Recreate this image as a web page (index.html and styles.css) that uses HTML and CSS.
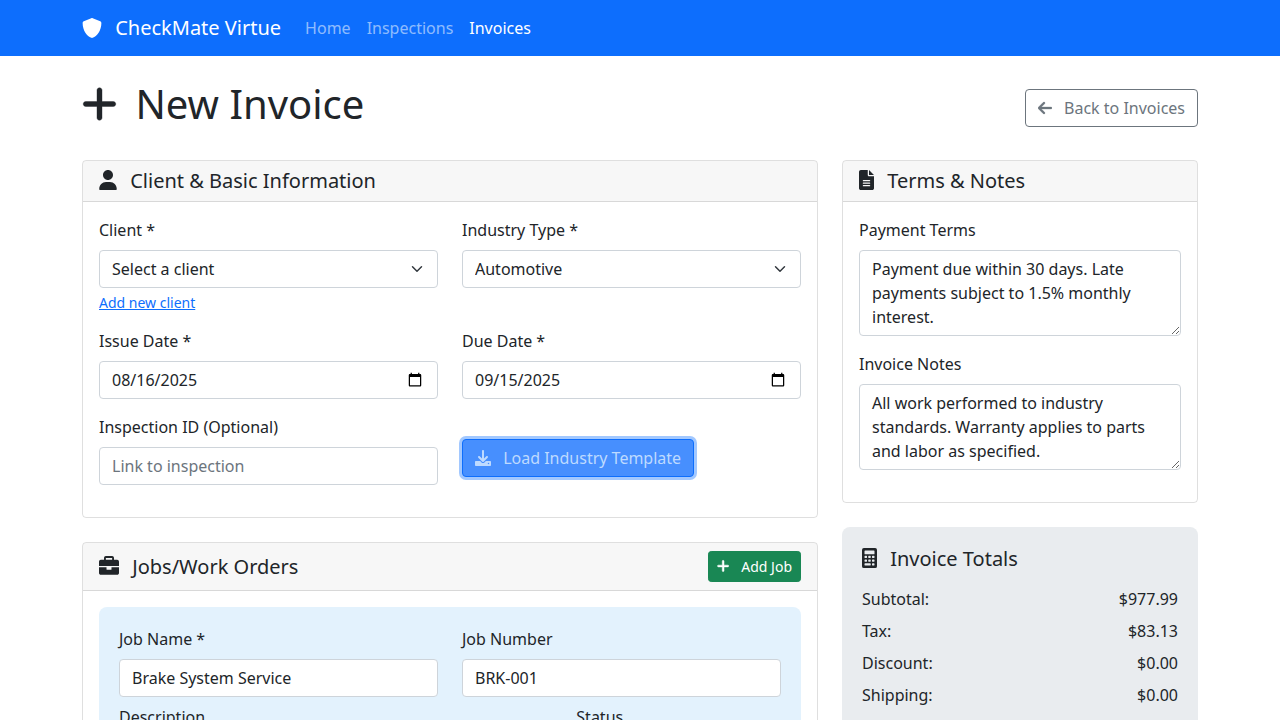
FILE: index.html
```html
<!DOCTYPE html>
<html lang="en">
<head>
<meta charset="utf-8">
<title>New Invoice - CheckMate Virtue</title>
<link rel="stylesheet" href="styles.css">
</head>
<body>
<svg class="sprite" aria-hidden="true">
  <symbol id="i-shield" viewBox="0 0 512 512"><path d="M256 0c6.500 0 12.500 1.200 18.400 3.700l192 80C484.300 91.100 496 108.600 496 128c0 198.500-114.500 335.700-221.500 380.300c-11.800 4.900-25.100 4.900-36.900 0C130.500 463.700 16 326.500 16 128c0-19.400 11.700-36.900 29.600-44.300l192-80C243.500 1.200 249.500 0 256 0z"/></symbol>
  <symbol id="i-plus" viewBox="0 0 448 512"><path d="M256 80c0-17.700-14.300-32-32-32s-32 14.300-32 32V224H48c-17.700 0-32 14.300-32 32s14.300 32 32 32H192V432c0 17.700 14.300 32 32 32s32-14.300 32-32V288H400c17.700 0 32-14.300 32-32s-14.300-32-32-32H256V80z"/></symbol>
  <symbol id="i-back" viewBox="0 0 448 512"><path stroke="currentColor" stroke-width="10" d="M9.400 233.400c-12.500 12.500-12.500 32.800 0 45.300l160 160c12.500 12.500 32.800 12.500 45.300 0s12.500-32.800 0-45.300L109.200 288H416c17.700 0 32-14.300 32-32s-14.300-32-32-32H109.200L214.600 118.600c12.500-12.500 12.500-32.800 0-45.300s-32.800-12.500-45.300 0l-160 160z"/></symbol>
  <symbol id="i-user" viewBox="0 0 448 512"><path d="M224 256c70.700 0 128-57.300 128-128S294.700 0 224 0S96 57.300 96 128s57.300 128 128 128zM274.700 304H173.300C77.600 304 0 381.600 0 477.300C0 502 5 512 24 512H424C443 512 448 502 448 477.300C448 381.600 370.400 304 274.700 304z"/></symbol>
  <symbol id="i-file" viewBox="0 0 384 512"><path d="M48 0C21.500 0 0 21.500 0 48V464c0 26.500 21.500 48 48 48H336c26.500 0 48-21.500 48-48V160H256c-17.700 0-32-14.300-32-32V0H48zM256 0V128H384L256 0zM112 256H272c8.800 0 16 7.200 16 16s-7.200 16-16 16H112c-8.800 0-16-7.200-16-16s7.200-16 16-16zm0 64H272c8.800 0 16 7.200 16 16s-7.200 16-16 16H112c-8.800 0-16-7.200-16-16s7.200-16 16-16zm0 64H272c8.800 0 16 7.200 16 16s-7.200 16-16 16H112c-8.800 0-16-7.200-16-16s7.200-16 16-16z"/></symbol>
  <symbol id="i-download" viewBox="0 0 512 512"><path d="M288 32c0-17.700-14.300-32-32-32s-32 14.300-32 32V274.700l-73.400-73.400c-12.500-12.500-32.800-12.500-45.300 0s-12.500 32.800 0 45.300l128 128c12.500 12.500 32.800 12.500 45.300 0l128-128c12.500-12.500 12.500-32.800 0-45.300s-32.800-12.500-45.300 0L288 274.700V32zM32 352c-17.700 0-32 14.300-32 32v96c0 17.700 14.300 32 32 32H480c17.700 0 32-14.300 32-32V384c0-17.700-14.300-32-32-32H346.500l-45.300 45.300c-25 25-65.500 25-90.500 0L165.500 352H32zm400 56a24 24 0 1 1 0 48 24 24 0 1 1 0-48z"/></symbol>
  <symbol id="i-briefcase" viewBox="0 0 512 512"><path d="M176 48H336V96H176V48zM128 48V96H48C21.500 96 0 117.500 0 144v112H512V144c0-26.500-21.500-48-48-48H384V48c0-26.500-21.500-48-48-48H176c-26.500 0-48 21.500-48 48zM512 288H320v48c0 8.800-7.200 16-16 16H208c-8.800 0-16-7.200-16-16V288H0V432c0 26.500 21.500 48 48 48H464c26.500 0 48-21.500 48-48V288z"/></symbol>
  <symbol id="i-calc" viewBox="0 0 384 512"><path fill-rule="evenodd" d="M48 0H336a48 48 0 0 1 48 48V464a48 48 0 0 1-48 48H48a48 48 0 0 1-48-48V48A48 48 0 0 1 48 0zM80 64a16 16 0 0 0-16 16v64a16 16 0 0 0 16 16H304a16 16 0 0 0 16-16V80a16 16 0 0 0-16-16zM76 200h40q12 0 12 12v32q0 12-12 12H76q-12 0-12-12v-32q0-12 12-12zM172 200h40q12 0 12 12v32q0 12-12 12h-40q-12 0-12-12v-32q0-12 12-12zM268 200h40q12 0 12 12v32q0 12-12 12h-40q-12 0-12-12v-32q0-12 12-12zM76 296h40q12 0 12 12v32q0 12-12 12H76q-12 0-12-12v-32q0-12 12-12zM172 296h40q12 0 12 12v32q0 12-12 12h-40q-12 0-12-12v-32q0-12 12-12zM268 296h40q12 0 12 12v32q0 12-12 12h-40q-12 0-12-12v-32q0-12 12-12zM76 392H212q12 0 12 12v32q0 12-12 12H76q-12 0-12-12v-32q0-12 12-12zM268 392h40q12 0 12 12v32q0 12-12 12h-40q-12 0-12-12v-32q0-12 12-12z"/></symbol>
</svg>

<nav class="navbar">
  <div class="container navbar-inner">
    <a class="brand"><svg class="icon icon-square"><use href="#i-shield"/></svg> CheckMate Virtue</a>
    <a class="nav-link">Home</a>
    <a class="nav-link">Inspections</a>
    <a class="nav-link active">Invoices</a>
  </div>
</nav>

<main class="container">
  <header class="page-head">
    <h1><svg class="icon"><use href="#i-plus"/></svg> New Invoice</h1>
    <a class="btn btn-outline"><svg class="icon"><use href="#i-back"/></svg> Back to Invoices</a>
  </header>

  <div class="layout">
    <div class="column">
      <section class="card">
        <div class="card-header"><h5><svg class="icon"><use href="#i-user"/></svg> Client &amp; Basic Information</h5></div>
        <div class="card-body form-grid">
          <div class="field">
            <label>Client *</label>
            <select class="control select"><option>Select a client</option></select>
            <div class="form-text"><a class="link">Add new client</a></div>
          </div>
          <div class="field">
            <label>Industry Type *</label>
            <select class="control select"><option>Automotive</option></select>
          </div>
          <div class="field">
            <label>Issue Date *</label>
            <input class="control" type="date" value="2025-08-16">
          </div>
          <div class="field">
            <label>Due Date *</label>
            <input class="control" type="date" value="2025-09-15">
          </div>
          <div class="field">
            <label>Inspection ID (Optional)</label>
            <input class="control" type="text" placeholder="Link to inspection">
          </div>
          <div class="field field-action">
            <button class="btn btn-primary" type="button" disabled><svg class="icon icon-square"><use href="#i-download"/></svg> Load Industry Template</button>
          </div>
        </div>
      </section>

      <section class="card">
        <div class="card-header card-header-split">
          <h5><svg class="icon icon-square"><use href="#i-briefcase"/></svg> Jobs/Work Orders</h5>
          <button class="btn btn-success" type="button"><svg class="icon"><use href="#i-plus"/></svg> Add Job</button>
        </div>
        <div class="card-body">
          <div class="job">
            <div class="job-row">
              <div><label>Job Name *</label><input class="control" type="text" value="Brake System Service"></div>
              <div><label>Job Number</label><input class="control" type="text" value="BRK-001"></div>
            </div>
            <div class="job-row job-row-wide">
              <div><label>Description</label><textarea class="control" rows="2"></textarea></div>
              <div><label>Status</label><select class="control select"></select></div>
            </div>
          </div>
        </div>
      </section>
    </div>

    <div class="column">
      <section class="card">
        <div class="card-header"><h5><svg class="icon icon-narrow"><use href="#i-file"/></svg> Terms &amp; Notes</h5></div>
        <div class="card-body">
          <div class="field">
            <label>Payment Terms</label>
            <textarea class="control" rows="3">Payment due within 30 days. Late payments subject to 1.5% monthly interest.</textarea>
          </div>
          <div class="field">
            <label>Invoice Notes</label>
            <textarea class="control" rows="3">All work performed to industry standards. Warranty applies to parts and labor as specified.</textarea>
          </div>
        </div>
      </section>

      <section class="totals">
        <h5><svg class="icon icon-narrow"><use href="#i-calc"/></svg> Invoice Totals</h5>
        <div class="total"><span>Subtotal:</span><span>$977.99</span></div>
        <div class="total"><span>Tax:</span><span>$83.13</span></div>
        <div class="total"><span>Discount:</span><span>$0.00</span></div>
        <div class="total"><span>Shipping:</span><span>$0.00</span></div>
      </section>
    </div>
  </div>
</main>
</body>
</html>
```
FILE: styles.css
```css
*, *::before, *::after { box-sizing: border-box; }

html, body { height: 100%; }

body {
  margin: 0;
  overflow: hidden;
  background: #fff;
  color: #212529;
  font-family: "Noto Sans", "Liberation Sans", sans-serif;
  font-size: 16px;
  line-height: 1.5;
}

.sprite { display: none; }

h1, h5 { margin: 0; font-weight: 400; line-height: 1.2; }
h1 { font-size: 40px; margin-bottom: 8px; }
h5 { font-size: 20px; }

.icon {
  width: 0.875em;
  height: 1em;
  margin-right: 8px;
  vertical-align: -0.125em;
  fill: currentColor;
}
h1 .icon { stroke: currentColor; stroke-width: 5px; vertical-align: -4.5px; }
h5 .icon { width: 18px; vertical-align: -2px; }
.btn-success .icon { overflow: visible; stroke: currentColor; stroke-width: 18px; vertical-align: -1px; }
.icon-square, h5 .icon-square { width: 1em; }
.icon-narrow, h5 .icon-narrow { width: 0.75em; }

.container { width: 1140px; margin: 0 auto; padding: 0 12px; }

.navbar { height: 56px; background: #0d6efd; }
.navbar-inner { display: flex; align-items: center; height: 100%; }
.brand { margin-right: 16px; color: #fff; font-size: 20px; white-space: nowrap; }
.nav-link { padding: 8px; color: rgba(255, 255, 255, 0.55); }
.nav-link.active { color: #fff; }

.page-head {
  display: flex;
  align-items: center;
  justify-content: space-between;
  margin: 24px 0;
}

.btn {
  display: inline-block;
  padding: 6px 12px;
  border: 1px solid transparent;
  border-radius: 4px;
  font: inherit;
  line-height: 1.5;
  white-space: nowrap;
}
.btn-outline { border-color: #6c757d; color: #6c757d; }
.btn-primary {
  background: #0d6efd;
  border-color: #0d6efd;
  color: #fff;
}
.btn-primary:disabled {
  background: #478ffe;
  border-color: #0d6efd;
  color: #bedaff;
  box-shadow: 0 0 0 3px #a2c8ff;
}
.btn-success {
  padding: 4px 8px;
  border-color: #198754;
  border-radius: 3.2px;
  background: #198754;
  color: #fff;
  font-size: 14px;
}

.layout { display: grid; grid-template-columns: 736px 356px; gap: 24px; }
.column { display: flex; flex-direction: column; gap: 24px; }

.card { border: 1px solid rgba(0, 0, 0, 0.125); border-radius: 4px; }
.card-header {
  padding: 8px 16px;
  border-bottom: 1px solid rgba(0, 0, 0, 0.125);
  border-radius: 3px 3px 0 0;
  background: rgba(0, 0, 0, 0.03);
}
.card-header-split { display: flex; align-items: center; justify-content: space-between; }
.card-body { padding: 16px; }

.form-grid { display: grid; grid-template-columns: 1fr 1fr; column-gap: 24px; }
.field { margin-bottom: 16px; }
.field-action { padding-top: 24px; }
label { display: block; margin-bottom: 8px; }

.control {
  display: block;
  width: 100%;
  min-height: 38px;
  margin: 0;
  padding: 6px 12px;
  border: 1px solid #ced4da;
  border-radius: 4px;
  background-color: #fff;
  color: #212529;
  font: inherit;
  line-height: 1.5;
  appearance: none;
}
input.control { height: 38px; }
textarea.control { resize: vertical; overflow: hidden; }
.control::placeholder { color: #6c757d; opacity: 1; }
.control::-webkit-datetime-edit,
.control::-webkit-datetime-edit-fields-wrapper,
.control::-webkit-datetime-edit-month-field,
.control::-webkit-datetime-edit-day-field,
.control::-webkit-datetime-edit-year-field { padding: 0; }
.control::-webkit-date-and-time-value { height: 1.5em; }
.select {
  padding-right: 36px;
  background-image: url("data:image/svg+xml,%3csvg xmlns='http://www.w3.org/2000/svg' viewBox='0 0 16 16'%3e%3cpath fill='none' stroke='%23343a40' stroke-linecap='round' stroke-linejoin='round' stroke-width='2' d='M2 5l6 6 6-6'/%3e%3c/svg%3e");
  background-repeat: no-repeat;
  background-position: right 12px center;
  background-size: 16px 12px;
}

.form-text { margin-top: 4px; font-size: 14px; }
.link { color: #0d6efd; text-decoration: underline; }

.job { padding: 20px; border-radius: 8px; background: #e3f2fd; }
.job-row { display: grid; grid-template-columns: 1fr 1fr; gap: 24px; margin-bottom: 8px; }
.job-row-wide { grid-template-columns: 433.33px 1fr; }

.totals { padding: 20px; border-radius: 8px; background: #e9ecef; }
.totals h5 { margin-bottom: 16px; }
.total { display: flex; justify-content: space-between; margin-bottom: 8px; }
```
